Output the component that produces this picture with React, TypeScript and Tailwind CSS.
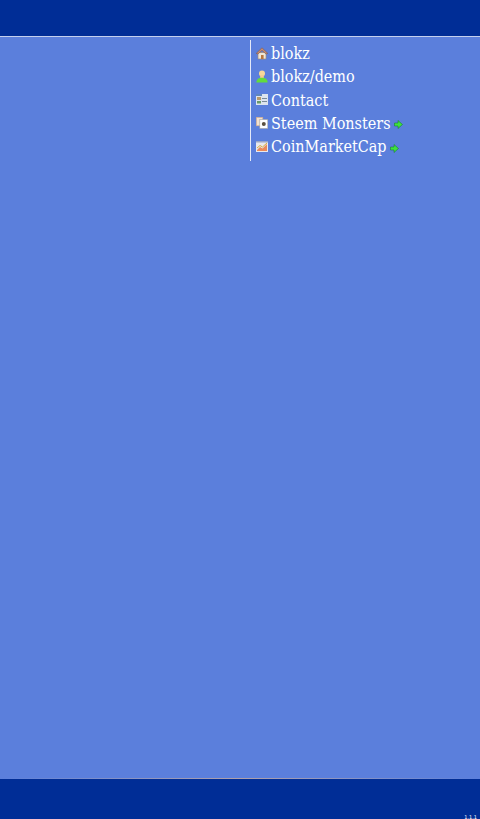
import React from 'react';

const House = () => (
  <svg width="12" height="13" viewBox="0 0 12 13">
    <path d="M2 5.5 L2 12 L10 12 L10 5.5 Z" fill="#efe6d6" stroke="#a08a78" strokeWidth="0.7" />
    <path d="M6 0.8 L11.8 6.4 L10 7 L6 3.4 L2 7 L0.2 6.4 Z" fill="#c98a70" stroke="#7a5a50" strokeWidth="0.6" />
    <rect x="5" y="8" width="2.6" height="4" fill="#b9773f" />
  </svg>
);

const Person = () => (
  <svg width="12" height="13" viewBox="0 0 12 13">
    <circle cx="6" cy="3.4" r="3" fill="#f6d79a" />
    <rect x="4.2" y="5" width="3.6" height="3.4" fill="#f3cd8e" />
    <path d="M0.4 12.6 C0.4 9 3 7.8 6 7.8 C9 7.8 11.6 9 11.6 12.6 Z" fill="#62dc3c" />
  </svg>
);

const Card = () => (
  <svg width="12" height="11" viewBox="0 0 12 11">
    <rect x="0" y="0" width="12" height="11" fill="#dde4ee" />
    <rect x="0" y="0" width="6" height="2" fill="#5f86bd" />
    <rect x="1" y="3" width="4" height="3" fill="#b99a6a" />
    <rect x="1" y="7" width="4" height="2.5" fill="#6a9a6a" />
    <rect x="6" y="4" width="5" height="1" fill="#7a8a9a" />
    <rect x="6" y="7" width="5" height="1" fill="#7a8a9a" />
  </svg>
);

const Cards = () => (
  <svg width="12" height="12" viewBox="0 0 12 12">
    <rect x="0.3" y="0.3" width="6.5" height="8.5" fill="#f4e2d0" stroke="#d0a888" strokeWidth="0.6" />
    <rect x="3.8" y="2.5" width="8" height="9" fill="#ffffff" stroke="#a0a0a0" strokeWidth="0.6" />
    <circle cx="7.8" cy="7" r="2" fill="#5a5040" />
  </svg>
);

const Chart = () => (
  <svg width="12" height="11" viewBox="0 0 12 11">
    <rect x="0" y="0" width="12" height="11" fill="#e8e8ee" />
    <rect x="0" y="0" width="12" height="1.5" fill="#9aa6c6" />
    <path d="M1 9 L4 6 L6.5 7.5 L11 3 L11 10 L1 10 Z" fill="#ea8a5a" />
    <path d="M1 7 L4 4.5 L6.5 6 L11 2" fill="none" stroke="#d8b040" strokeWidth="1" />
  </svg>
);

const Arrow = () => (
  <svg width="9" height="9" viewBox="0 0 9 9" className="ml-[3px] mt-[2px]">
    <path d="M0.5 3 L4 3 L4 0.5 L8.5 4.5 L4 8.5 L4 6 L0.5 6 Z" fill="#3fe03f" stroke="#0f7a20" strokeWidth="0.5" />
  </svg>
);

const links = [
  { label: 'blokz', icon: <House />, external: false },
  { label: 'blokz/demo', icon: <Person />, external: false },
  { label: 'Contact', icon: <Card />, external: false },
  { label: 'Steem Monsters', icon: <Cards />, external: true },
  { label: 'CoinMarketCap', icon: <Chart />, external: true },
];

const App: React.FC = () => {
  return (
    <div className="h-[819px] w-[480px] flex flex-col overflow-hidden bg-[#5b7fdc] font-['DejaVu_Serif_Condensed','DejaVu_Serif',serif] text-white">
      <header className="h-[37px] shrink-0 bg-[#002d96] border-b border-[#c4d0ee]" />
      <main className="flex-1 pt-[3px] pl-[250px]">
        <ul className="border-l border-[#e4e9f8] h-[121px] pl-[5px] pt-[2.4px]">
          {links.map(link => (
            <li key={link.label} className="flex items-center h-[23.3px]">
              <span className="w-[15px] flex items-center mt-[-2px]">{link.icon}</span>
              <span className="text-[16px] leading-none whitespace-nowrap">{link.label}</span>
              {link.external && <Arrow />}
            </li>
          ))}
        </ul>
      </main>
      <div className="h-[1px] shrink-0 bg-gradient-to-r from-[#5b7fdc] via-[#b0a0a8] to-[#5b7fdc]" />
      <footer className="relative h-[40px] shrink-0 bg-[#002d96]">
        <span className="absolute right-[3px] bottom-[-1px] text-[5px] leading-none font-['DejaVu_Sans',sans-serif] text-white">1.1.1</span>
      </footer>
    </div>
  );
};

export default App;
